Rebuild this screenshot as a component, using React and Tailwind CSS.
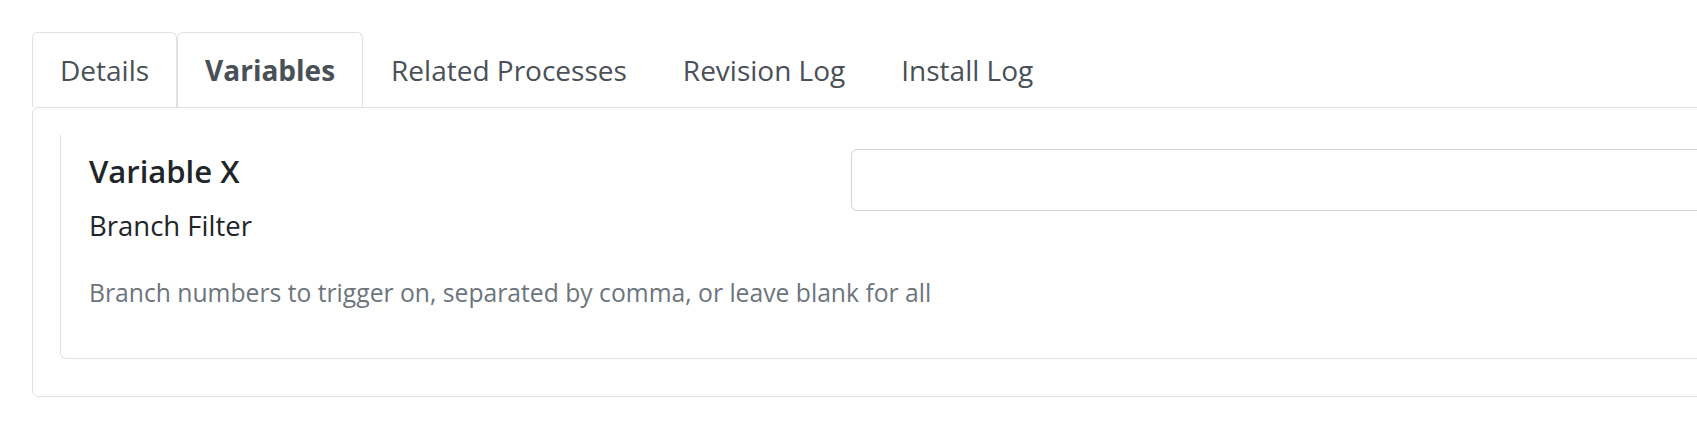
import React from 'react';

const tabs = [
  { label: 'Details', bordered: true },
  { label: 'Variables', bordered: true, active: true },
  { label: 'Related Processes' },
  { label: 'Revision Log' },
  { label: 'Install Log' },
];

export default function App() {
  return (
    <div className="w-[1697px] h-[425px] overflow-hidden bg-white" style={{ fontFamily: '"Open Sans", sans-serif' }}>
      <div className="w-[2400px] pt-[32px] pl-[32px]">
        {/* tab strip */}
        <ul className="flex">
          {tabs.map(tab => (
            <li key={tab.label}>
              <button
                className={
                  'h-[75px] px-[27px] flex items-center text-[28px] text-[#495057] rounded-t-[6px] border border-b-0 ' +
                  (tab.bordered ? 'border-[#dee2e6] ' : 'border-transparent ') +
                  (tab.active ? 'font-bold' : 'font-normal')
                }
              >
                {tab.label}
              </button>
            </li>
          ))}
        </ul>

        {/* tab content */}
        <div className="border border-[#dee2e6] rounded-[6px] h-[290px] pt-[27px] pl-[27px]">
          <div className="border border-t-0 border-[#dee2e6] rounded-b-[6px] h-[224px] pl-[28px]">
            <div className="flex">
              <div className="w-[762px]">
                <h5 className="mt-[18px] text-[31px] leading-[36px] font-semibold text-[#212529]">Variable X</h5>
                <label className="block mt-[17px] text-[27.5px] leading-[40px] text-[#212529]">Branch Filter</label>
              </div>
              <div className="flex-1 pt-[14px]">
                <input
                  type="text"
                  className="w-full h-[62px] border border-[#ced4da] rounded-[6px] bg-white"
                />
              </div>
            </div>
            <p className="mt-[29px] text-[24.7px] leading-[36px] text-[#6c757d] whitespace-nowrap">
              Branch numbers to trigger on, separated by comma, or leave blank for all
            </p>
          </div>
        </div>
      </div>
    </div>
  );
}
